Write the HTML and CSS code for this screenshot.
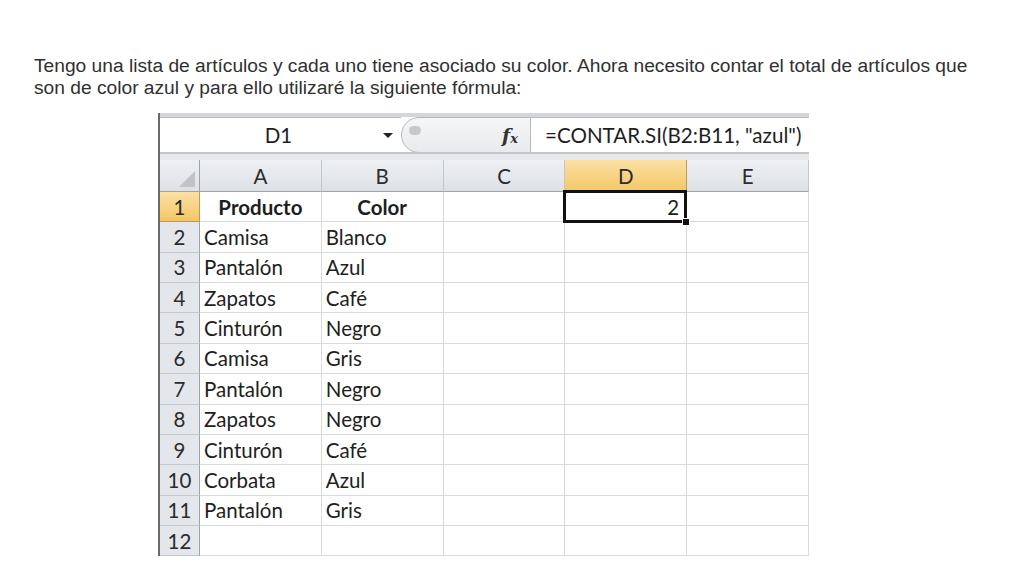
FILE: index.html
```html
<!DOCTYPE html>
<html lang="es">
<head>
<meta charset="utf-8">
<title>CONTAR.SI</title>
<link rel="stylesheet" href="styles.css">
</head>
<body>
<main class="slide">
  <p class="intro">Tengo una lista de artículos y cada uno tiene asociado su color. Ahora necesito contar el total de artículos que son de color azul y para ello utilizaré la siguiente fórmula:</p>
  <section class="sheet">
    <div class="fbar">
      <div class="namebox"><span class="name">D1</span><span class="arrow"></span></div>
      <div class="fxzone"><span class="knob"></span><span class="fx">f<sub>x</sub></span></div>
      <div class="formula">=CONTAR.SI(B2:B11, "azul")</div>
    </div>
    <div class="grid">
      <div class="corner"><span class="tri"></span></div>
      <div class="ch">A</div><div class="ch">B</div><div class="ch">C</div><div class="ch sel">D</div><div class="ch">E</div>

      <div class="rh sel">1</div><div class="c bold">Producto</div><div class="c bold">Color</div><div class="c"></div><div class="c active"><span>2</span><span class="handle"></span></div><div class="c"></div>
      <div class="rh">2</div><div class="c">Camisa</div><div class="c">Blanco</div><div class="c"></div><div class="c"></div><div class="c"></div>
      <div class="rh">3</div><div class="c">Pantalón</div><div class="c">Azul</div><div class="c"></div><div class="c"></div><div class="c"></div>
      <div class="rh">4</div><div class="c">Zapatos</div><div class="c">Café</div><div class="c"></div><div class="c"></div><div class="c"></div>
      <div class="rh">5</div><div class="c">Cinturón</div><div class="c">Negro</div><div class="c"></div><div class="c"></div><div class="c"></div>
      <div class="rh">6</div><div class="c">Camisa</div><div class="c">Gris</div><div class="c"></div><div class="c"></div><div class="c"></div>
      <div class="rh">7</div><div class="c">Pantalón</div><div class="c">Negro</div><div class="c"></div><div class="c"></div><div class="c"></div>
      <div class="rh">8</div><div class="c">Zapatos</div><div class="c">Negro</div><div class="c"></div><div class="c"></div><div class="c"></div>
      <div class="rh">9</div><div class="c">Cinturón</div><div class="c">Café</div><div class="c"></div><div class="c"></div><div class="c"></div>
      <div class="rh">10</div><div class="c">Corbata</div><div class="c">Azul</div><div class="c"></div><div class="c"></div><div class="c"></div>
      <div class="rh">11</div><div class="c">Pantalón</div><div class="c">Gris</div><div class="c"></div><div class="c"></div><div class="c"></div>
      <div class="rh">12</div><div class="c"></div><div class="c"></div><div class="c"></div><div class="c"></div><div class="c"></div>
    </div>
  </section>
</main>
</body>
</html>
```

FILE: styles.css
```css
* { box-sizing: border-box; }
html, body { margin: 0; padding: 0; background: #fff; }
body { width: 1024px; height: 576px; overflow: hidden; }

.slide {
  padding: 55px 0 0 34px;
}

.intro {
  margin: 0;
  width: 950px;
  font-family: "Liberation Sans", Arial, sans-serif;
  font-size: 19.2px;
  line-height: 22px;
  color: #303030;
}

.sheet {
  margin: 14px 0 0 124px;
  width: 651px;
  border-left: 2px solid #6a6a6a;
  font-family: Lato, "Open Sans", sans-serif;
  color: #1e1e1e;
}

/* formula bar */
.fbar {
  display: flex;
  height: 47px;
  border-top: 4px solid #d4d6d9;
  border-bottom: 7px solid #e6e8eb;
  background: #fff;
  position: relative;
}
.fbar::after {
  content: "";
  position: absolute;
  left: 0; right: 0; bottom: -1px;
  height: 2px;
  background: #c3c6ca;
}
.namebox {
  width: 241px;
  display: flex;
  align-items: center;
  border-top: 1px solid #b8bcc2;
  border-bottom: 1px solid #b8bcc2;
}
.name {
  flex: 1;
  text-align: center;
  font-size: 20.5px;
  padding-left: 14px;
}
.arrow {
  width: 0; height: 0;
  border-left: 5px solid transparent;
  border-right: 5px solid transparent;
  border-top: 5px solid #222;
  margin-right: 8px;
}
.fxzone {
  width: 130px;
  display: flex;
  align-items: center;
  margin: 0;
  background: linear-gradient(#f5f6f7, #e8eaec);
  border: 1px solid #b4b7bb;
  border-radius: 18px 0 0 18px;
  position: relative;
}
.knob {
  width: 12px;
  height: 9px;
  margin: -10px 0 0 7px;
  border-radius: 5px;
  background: #c5c8cc;
}
.fx {
  margin-left: auto;
  margin-right: 12px;
  font-family: "DejaVu Serif", "Liberation Serif", serif;
  font-style: italic;
  font-weight: bold;
  font-size: 19px;
  color: #333;
}
.fx sub {
  font-size: 13px;
  vertical-align: -1px;
}
.formula {
  flex: 1;
  display: flex;
  align-items: center;
  padding-left: 14px;
  font-size: 20.6px;
  border-top: 1px solid #b8bcc2;
  border-bottom: 1px solid #b8bcc2;
  white-space: nowrap;
}

/* grid */
.grid {
  display: grid;
  grid-template-columns: 40px repeat(5, 121.8px);
  grid-template-rows: 32px repeat(12, 30.36px);
}
.grid > div {
  border-right: 1px solid #d8dadd;
  border-bottom: 1px solid #d8dadd;
  display: flex;
  align-items: center;
  font-size: 20.5px;
  white-space: nowrap;
}
.corner, .ch, .rh {
  background: linear-gradient(#eef0f3, #dde1e6);
  color: #2b2b2b;
}
.grid > .corner { border-right: 1px solid #9ea4ab; border-bottom: 1px solid #9ea4ab; position: relative; }
.tri {
  position: absolute;
  right: 4px; bottom: 4px;
  width: 0; height: 0;
  border-left: 16px solid transparent;
  border-bottom: 16px solid #bfc4ca;
}
.grid > .ch {
  justify-content: center;
  border-right: 1px solid #c3c8ce;
  border-bottom: 1px solid #9ea4ab;
}
.grid > .rh {
  justify-content: center;
  background: #e3e6ea;
  border-right: 1px solid #9ea4ab;
  border-bottom: 1px solid #c3c8ce;
}
.grid > .sel {
  background: linear-gradient(#fbe1a6, #f3c766);
  border-color: #c99a3a;
}
.c { padding-left: 4px; }
.bold { font-weight: bold; justify-content: center; padding-left: 0; }
.grid > .active {
  position: relative;
  justify-content: flex-end;
  padding-right: 5px;
  border: 3px solid #111;
  margin: -2px 0 -1px -2px;
}
.handle {
  position: absolute;
  right: -6px; bottom: -6px;
  width: 8px; height: 8px;
  background: #111;
  border: 1px solid #fff;
}
```
